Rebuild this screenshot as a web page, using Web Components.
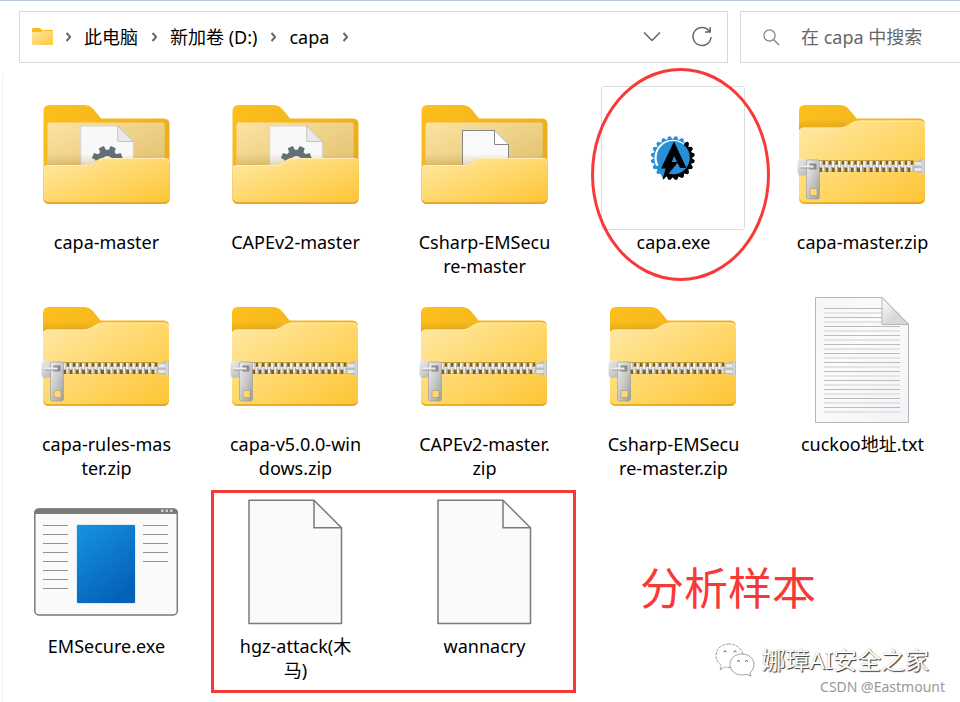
<!DOCTYPE html>
<html lang="zh-CN">
<head>
<meta charset="utf-8">
<title>capa</title>
<style>
body { margin: 0; background: #fff; color: #000; font: 18px/24px "Noto Sans", "Noto Sans CJK SC", sans-serif; }
</style>
</head>
<body>
<explorer-window>
  <address-bar slot="bar">
    <path-crumb>此电脑</path-crumb>
    <path-crumb>新加卷 (D:)</path-crumb>
    <path-crumb>capa</path-crumb>
  </address-bar>
  <search-box slot="bar" hint="在 capa 中搜索"></search-box>
  <file-tile icon="folder-gear">capa-master</file-tile>
  <file-tile icon="folder-gear">CAPEv2-master</file-tile>
  <file-tile icon="folder-page">Csharp-EMSecu<br>re-master</file-tile>
  <file-tile icon="capa">capa.exe</file-tile>
  <file-tile icon="zip">capa-master.zip</file-tile>
  <file-tile icon="zip">capa-rules-mas<br>ter.zip</file-tile>
  <file-tile icon="zip">capa-v5.0.0-win<br>dows.zip</file-tile>
  <file-tile icon="zip">CAPEv2-master.<br>zip</file-tile>
  <file-tile icon="zip">Csharp-EMSecu<br>re-master.zip</file-tile>
  <file-tile icon="text">cuckoo地址.txt</file-tile>
  <file-tile icon="app">EMSecure.exe</file-tile>
  <file-tile icon="blank">hgz-attack(木<br>马)</file-tile>
  <file-tile icon="blank">wannacry</file-tile>
  <mark-ring></mark-ring>
  <mark-box></mark-box>
  <mark-note>分析样本</mark-note>
  <page-credit slot="credit">
    <span slot="name">娜璋AI安全之家</span>
    <span slot="site">CSDN @Eastmount</span>
  </page-credit>
</explorer-window>

<script>
const define = (name, html, setup) => customElements.define(name, class extends HTMLElement {
  constructor() {
    super();
    this.attachShadow({ mode: 'open' }).innerHTML = typeof html === 'function' ? html(this) : html;
    if (setup) setup(this);
  }
});

/* Toothed wheel outline around (cx, cy) */
function gearPath(cx, cy, outer, inner, teeth, wide, narrow) {
  const pts = [];
  for (let i = 0; i < teeth; i++) {
    const a = (i / teeth) * Math.PI * 2 - Math.PI / 2 + Math.PI / teeth;
    for (const [r, d] of [[inner, -wide], [outer, -narrow], [outer, narrow], [inner, wide]])
      pts.push((cx + r * Math.cos(a + d)).toFixed(2) + ' ' + (cy + r * Math.sin(a + d)).toFixed(2));
  }
  return 'M' + pts.join('L') + 'Z';
}
const lines = (x1, x2, y, n, step = 9) =>
  Array.from({ length: n }, (_, i) => `M${x1} ${y + i * step}H${x2}`).join('');

const defs = `<defs>
  <linearGradient id="back" x1="0" y1="0" x2="1" y2="1"><stop offset="0" stop-color="#fdc01c"/><stop offset="1" stop-color="#e5a420"/></linearGradient>
  <linearGradient id="front" x1="0" y1="0" x2="1" y2="1"><stop offset="0" stop-color="#ffe9a6"/><stop offset=".5" stop-color="#ffd86c"/><stop offset="1" stop-color="#fec535"/></linearGradient>
  <linearGradient id="inside" x1="0" y1="0" x2="1" y2="1"><stop offset="0" stop-color="#fce3a2"/><stop offset="1" stop-color="#e0be6b"/></linearGradient>
  <linearGradient id="shade" x1="0" y1="0" x2="0" y2="1"><stop offset="0" stop-color="#a77715" stop-opacity="0"/><stop offset="1" stop-color="#a77715" stop-opacity=".3"/></linearGradient>
  <linearGradient id="metal" x1="0" y1="0" x2="1" y2="1"><stop offset="0" stop-color="#ededed"/><stop offset=".5" stop-color="#c9c9c9"/><stop offset="1" stop-color="#9b9b9b"/></linearGradient>
  <linearGradient id="blue" x1="0" y1="0" x2=".6" y2="1"><stop offset="0" stop-color="#1893e2"/><stop offset="1" stop-color="#0362b8"/></linearGradient>
  <linearGradient id="fold" x1="0" y1="0" x2="1" y2="1"><stop offset="0" stop-color="#fff"/><stop offset=".6" stop-color="#d8d8d8"/></linearGradient>
  <linearGradient id="paper" x1="0" y1="0" x2="1" y2="1"><stop offset="0" stop-color="#f5f6f6"/><stop offset=".4" stop-color="#fafbfb"/><stop offset="1" stop-color="#f1f3f6"/></linearGradient>
</defs>`;

const folderBack = `<path d="M8.500 25q0-6 6-6H48c6 0 9 2 12 6l6 7.500h63q5.500 0 5.500 6V112q0 6-6 6h-114q-6 0-6-6z" fill="url(#back)"/>`;
const openFolder = inner => `${folderBack}
  <path d="M12.500 39q0-2.500 2.500-2.500H127q2.700 0 2.700 2.700V90H12.500z" fill="url(#inside)"/>
  ${inner}
  <path d="M12.500 68H129.700V80H12.500z" fill="url(#shade)"/>
  <path d="M8.500 83q0-4 4-4H51c5 0 7-2 10-4s5-3 8-3h61q4.500 0 4.500 4v36q0 6-6 6h-114q-6 0-6-6z" fill="#e8a92b"/>
  <path d="M8.500 83q0-4 4-4H51c5 0 7-2 10-4s5-3 8-3h61q4.500 0 4.500 4v34q0 6-6 6h-114q-6 0-6-6z" fill="url(#front)"/>
  <path d="M9 83q0-3.500 4-3.500H51c5 0 7-2 10-4s5-3 8-3h61q4 0 4 3.500" fill="none" stroke="#fff0bd" stroke-opacity=".8"/>`;

let teeth = '';
for (let x = 28.5; x < 121; x += 6.3) {
  teeth += `<path d="M${x} 75h3.600v6l-1.500.8-2.100-.8z" fill="#f1f1f1"/><path d="M${x + 2.4} 75h1.300v6.300h-1.300z" fill="#b3b3b3"/>
    <path d="M${x + 3.2} 85.700h3.300v-6.500l-1.500-.7-1.800.8z" fill="#e9e9e9"/><path d="M${x + 5.3} 85.700h1.200v-6h-1.200z" fill="#a5a5a5"/>`;
}

const icons = {
  'folder-gear': () => openFolder(`<path d="M45.700 40H82.700L98.300 55.500V85H45.700z" fill="#f8f8f8" stroke="#d4d4d4"/>
    <path d="M82.700 40V55.500H98.300z" fill="#e9e9e9" stroke="#c4c4c4"/>
    <path fill-rule="evenodd" fill="#5f7077" d="${gearPath(72.3, 75.5, 15.8, 11.8, 8, .27, .17)}M66.800 75.500a5.500 5.500 0 1 0 11 0a5.500 5.500 0 1 0-11 0z"/>`),
  'folder-page': () => openFolder(`<path d="M49.500 44.500H81.500L95.500 58.500V85H49.500z" fill="#f9f9f9" stroke="#858585"/>
    <path d="M81.500 44.500V58.500H95.500" fill="#fff" stroke="#858585"/>`),
  zip: () => `<g transform="translate(-.5 0)">${folderBack}
    <path d="M8.500 34H60L50 43H8.500z" fill="url(#shade)"/>
    <path d="M8.500 46q0-4.500 5-4.500H49c5 0 8-1.500 11-4q4-3 9-3h60q5.500 0 5.500 5.500V110q0 6-6 6h-114q-6 0-6-6z" fill="url(#front)"/>
    <path d="M9 46q0-4 5-4H49c5 0 8-1.500 11-4q4-3 9-3h60q5 0 5 5" fill="none" stroke="#fff0b8" stroke-opacity=".8"/>
    <rect x="28" y="74.500" width="95" height="11.500" fill="#856011"/>${teeth}
    <path d="M123 75h3l3-1.500h5.500V87H129l-3-1H123z" fill="#bdbdbd"/><path d="M124 76h7v3.500h-7zM124 82h7v3h-7z" fill="#e7e7e7"/><path d="M132.500 74v13" stroke="#ececec"/>
    <path d="M10 72.500l16 1q2 0 2 2v11q0 1.500-2 1.500l-6 .5-10 1.500q-3 0-3-5v-8q0-4.500 3-4.500z" fill="url(#metal)"/>
    <path d="M17.500 74H27q2 0 2 2v35q0 2-2 2H18q-2 0-2-2V76q0-2 1.500-2zM19.500 102.500v7h7v-7z" fill="url(#metal)" fill-rule="evenodd" stroke="#999" stroke-width=".6"/>
    <path d="M19 77.500h7v6h-7z" fill="#8b8b8b"/><path d="M10 79.500h13v2.500H10z" fill="#eee"/><path d="M10 82h13" stroke="#999"/></g>`,
  text: () => `<path d="M24.500 9.500H91L117.500 36V134.500H24.500z" fill="url(#paper)" stroke="#b5b5b5"/>
    <path d="${lines(33, 109, 25, 12)}" stroke="#e3e4e5" stroke-width="2"/>
    <path d="${lines(33, 109, 38.5, 10)}M33 20.500H91M33 29.500H91" stroke="#b9bbbc"/>
    <path d="M91 9.500L117.500 36.500H91z" fill="url(#fold)" stroke="#b5b5b5"/>`,
  app: () => `<rect x="-.2" y="19" width="142.500" height="106" rx="4" fill="#fafafa" stroke="#7a7a76" stroke-width="1.500"/>
    <path d="M-.8 24v-1q0-4.500 4.500-4.500H138.500q4.500 0 4.500 4.500v1z" fill="#7a7a76"/>
    <path d="M126 19.500h2.500v2.500H126zM130.500 19.500h2.500v2.500h-2.500zM135 19.500h2.500v2.500H135z" fill="#ccc"/>
    <path d="${lines(8, 33, 35.5, 8)}${lines(108, 133, 35.5, 5)}" stroke="#929292"/>
    <rect x="41" y="34" width="60" height="80" rx="2" fill="#deedf5"/>
    <rect x="42" y="35" width="58" height="78" rx="1" fill="url(#blue)"/>`,
  blank: () => `<path d="M25 10.300H90L117.500 37.800V133.500H25z" fill="#fafafa" stroke="#7a7a78" stroke-width="1.500" stroke-linejoin="round"/>
    <path d="M90 10.300V37.800H117.500" fill="none" stroke="#7a7a78" stroke-width="1.500"/>`,
  capa: () => `<defs><clipPath id="dark"><path d="M71 72L84 56L89 50L100 50V100H58z"/></clipPath></defs>
    <rect x="-.500" y=".500" width="143" height="143" rx="2" fill="#fff" stroke="#dcdcdc"/>
    <path d="${gearPath(70.7, 72, 22, 19, 20, .15, .05)}" fill="#2790d9"/>
    <circle cx="70.700" cy="72" r="18.300" fill="#fff"/>
    <path d="${gearPath(70.7, 72, 22, 19.4, 20, .15, .05)}" fill="#000" clip-path="url(#dark)"/>
    <circle cx="71.200" cy="71.700" r="16.600" fill="#2790d9"/>
    <path d="M53 80L60 79L65 86L60 90Z" fill="#2790d9"/>
    <path d="M72 57L83.500 81.500H78.500L72 68.500L69 76.500H75L61.200 93L64.500 81.800H60z" fill="#000" stroke="#000" stroke-width="1.200"/>`
};

const chevron = `<svg width="5" height="10" viewBox="0 0 5 10" aria-hidden="true"><path d="M.5 1L4.200 5L.5 9" fill="none" stroke="#666" stroke-width="2"/></svg>`;

define('explorer-window', `<style>
  :host { display: flex; flex-direction: column; position: relative; min-height: 100vh; box-sizing: border-box; border-top: 1px solid #b8c7d9; }
  header { display: flex; gap: 12px; padding: 10px 0 11px 19px; }
  main { display: grid; flex: 1; grid-template-columns: repeat(5, minmax(0, 1fr)); grid-auto-rows: minmax(202px, auto); align-content: start;
    position: relative; margin-left: 2px; border-left: 1px solid #f0f0f0; padding: 12px 3px 0 9px; }
</style><header><slot name="bar"></slot></header><main><slot></slot></main><slot name="credit"></slot>`);

define('path-crumb', `<style>
  :host { display: flex; align-items: center; gap: 14px; }
  button { all: unset; white-space: nowrap; }
  svg { display: block; }
</style><button type="button"><slot></slot></button>${chevron}`);

define('address-bar', `<style>
  :host { display: flex; align-items: center; gap: 13px; flex: 1; height: 52px; box-sizing: border-box; border: 1px solid #d9d9d9; padding: 0 14px 0 12px; }
  svg { display: block; }
  .tools { display: flex; align-items: center; gap: 30px; margin-left: auto; }
  button { all: unset; }
</style>
<svg width="21" height="18" viewBox="0 0 21 18" aria-hidden="true"><defs><linearGradient id="f" x2="1" y2="1"><stop stop-color="#ffe7a0"/><stop offset="1" stop-color="#ffc93d"/></linearGradient></defs><path d="M0 1.500Q0 0 1.500 0H8L10 2H20Q21 2 21 3V10H0z" fill="#fbb81d"/><path d="M0 4H8.500L10.500 3H21V16Q21 17 20 17H1Q0 17 0 16z" fill="url(#f)"/></svg>
${chevron}<slot></slot>
<div class="tools">
  <button type="button" aria-label="Recent locations"><svg width="18" height="10" viewBox="0 0 18 10"><path d="M1 .5L9 8.500L17 .5" fill="none" stroke="#666" stroke-width="1.500"/></svg></button>
  <button type="button" aria-label="Refresh"><svg width="22" height="22" viewBox="0 0 22 22"><path d="M18.500 5.500A9 9 0 1 0 20 11M19.200 1V6H14" fill="none" stroke="#666" stroke-width="1.500"/></svg></button>
</div>`);

define('search-box', el => `<style>
  :host { display: flex; align-items: center; gap: 21px; flex: 0 0 220px; height: 52px; box-sizing: border-box; border: 1px solid #d9d9d9; border-right: 0; padding-left: 22px; }
  svg { display: block; flex: none; }
  input { font: inherit; color: #666; border: 0; padding: 0; outline: 0; background: none; width: 100%; min-width: 0; }
  input::placeholder { color: #666; opacity: 1; }
</style>
<svg width="17" height="17" viewBox="0 0 17 17" aria-hidden="true"><circle cx="6.500" cy="6.500" r="5.600" fill="none" stroke="#7d828c" stroke-width="1.200"/><path d="M10.700 10.700L16 16" stroke="#7d828c" stroke-width="1.300"/></svg>
<input type="search" placeholder="${el.getAttribute('hint')}" aria-label="${el.getAttribute('hint')}">`);

define('file-tile', el => `<style>
  :host { display: flex; flex-direction: column; align-items: center; text-align: center; }
  svg { display: block; overflow: visible; }
</style>
<svg width="144" height="144" viewBox="0 0 144 144" aria-hidden="true">${defs}${icons[el.getAttribute('icon')]()}</svg>
<div><slot></slot></div>`);

define('mark-ring', `<style>
  :host { position: absolute; grid-area: 1 / 4; left: 12px; top: -18px; width: 179px; height: 213px; box-sizing: border-box; border: 3px solid #f93838; border-radius: 50%; }
</style>`);

define('mark-box', `<style>
  :host { position: absolute; grid-area: 3 / 2 / 4 / 4; left: 10px; right: 3px; top: 0; height: 203px; box-sizing: border-box; border: 3px solid #f93838; }
</style>`);

define('mark-note', `<style>
  :host { grid-area: 3 / 4 / 4 / 6; padding: 66px 0 0 61px; font-size: 44px; line-height: 64px; color: #f93838; }
</style><slot></slot>`);

define('page-credit', `<style>
  :host { display: grid; justify-items: end; position: absolute; right: 15px; bottom: 5px; }
  .name { display: flex; align-items: center; gap: 7px; margin-right: 16px; font-size: 24px; line-height: 34px; color: #fff; text-shadow: 1px 1px 1px #333, 0 0 1px #aaa; }
  .site { font: 14px/20px "Noto Sans", sans-serif; color: #999; }
  svg { display: block; }
</style>
<div class="name"><svg width="40" height="34" viewBox="0 0 40 34" aria-hidden="true">
  <g fill="#fff" stroke="#888" stroke-width=".8"><path d="M14 1C6 1 1 6 1 13c0 4 2 7 5.500 9.500L5 27l5-3c2 .6 4 .7 6 .5M28 11C26 5 21 1 14 1" stroke-dasharray="3 1"/>
  <path d="M27 11c-7 0-12 4.500-12 10.500S20 32 27 32c2 0 3.500-.3 5-.8l4 2-1-3.500c2.500-2 4-5 4-8C39 15.500 34 11 27 11z"/></g>
  <g fill="none" stroke="#555"><path d="M8.500 9q1.500-2.500 3 0M18.500 9q1.500-2.500 3 0M22 18.500q1.500-2 3 0M30 18.500q1.500-2 3 0"/></g>
</svg><slot name="name"></slot></div>
<div class="site"><slot name="site"></slot></div>`);
</script>
</body>
</html>
